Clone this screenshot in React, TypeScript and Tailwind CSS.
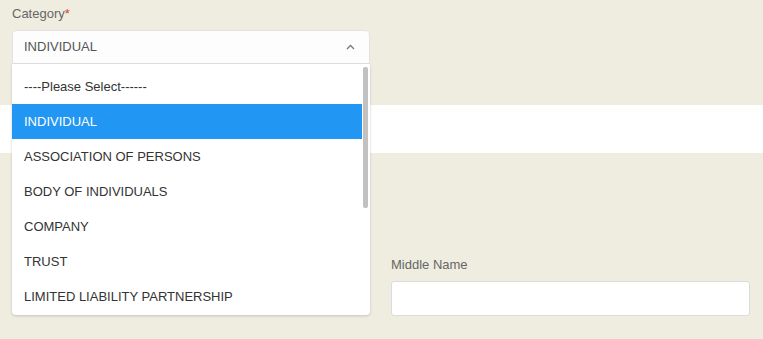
import React from 'react';

const options = [
  '----Please Select------',
  'INDIVIDUAL',
  'ASSOCIATION OF PERSONS',
  'BODY OF INDIVIDUALS',
  'COMPANY',
  'TRUST',
  'LIMITED LIABILITY PARTNERSHIP',
];

const selected = 'INDIVIDUAL';

const App: React.FC = () => {
  return (
    <div
      className="relative h-[339px] w-[763px] overflow-hidden bg-[#efede0] text-[13px]"
      style={{ fontFamily: '"Liberation Sans", Arial, sans-serif' }}
    >
      {/* category select */}
      <div className="pl-[12px] pt-[4px]">
        <label className="block h-[20px] leading-[20px] text-[#666]">
          Category<span className="text-[#e53935]">*</span>
        </label>
        <div className="mt-[6px] flex h-[34px] w-[358px] items-center justify-between rounded-t-[4px] border border-[#e2e2e2] bg-[#fdfdfd] pl-[11px] pr-[14px] text-[#555]">
          <span>{selected}</span>
          <svg width="9" height="6" viewBox="0 0 9 6" fill="none" stroke="#777" strokeWidth="1.3">
            <polyline points="1,5 4.5,1.5 8,5" />
          </svg>
        </div>
      </div>

      {/* white band */}
      <div className="mt-[41px] h-[48px] bg-white" />

      {/* name row */}
      <div className="mt-[102px] grid grid-cols-[358px_359px] gap-x-[21px] pl-[12px]">
        <div />
        <div>
          <label className="block h-[20px] leading-[20px] text-[#666]">Middle Name</label>
          <input
            className="mt-[6px] block h-[35px] w-full rounded-[3px] border border-[#dcdcdc] bg-white px-3 outline-none"
            type="text"
          />
        </div>
      </div>

      {/* open dropdown */}
      <div className="absolute left-[12px] top-[64px] flex h-[251px] w-[358px] overflow-hidden rounded-b-[4px] bg-white shadow-[0_1px_3px_rgba(0,0,0,0.18)]">
        <ul className="flex-1 pt-[5px]">
          {options.map((opt) => (
            <li
              key={opt}
              className={
                opt === selected
                  ? 'flex h-[35px] items-center bg-[#2196f3] pl-[12px] text-white'
                  : 'flex h-[35px] items-center pl-[12px] text-[#333]'
              }
            >
              {opt}
            </li>
          ))}
        </ul>
        <div className="w-[8px] pt-[3px]">
          <div className="ml-[1px] h-[141px] w-[5px] rounded-[2px] bg-[#c1c1c1]" />
        </div>
      </div>
    </div>
  );
};

export default App;
